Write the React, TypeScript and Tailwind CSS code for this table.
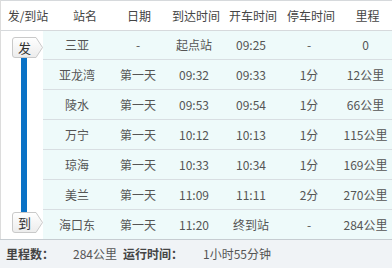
import type { ReactNode } from 'react'

// Train timetable: one header row, a white "发/到" rail on the left and the
// station rows on a pale cyan ground, with totals in a grey footer strip.
const stops = [
  ['三亚', '-', '起点站', '09:25', '-', '0'],
  ['亚龙湾', '第一天', '09:32', '09:33', '1分', '12公里'],
  ['陵水', '第一天', '09:53', '09:54', '1分', '66公里'],
  ['万宁', '第一天', '10:12', '10:13', '1分', '115公里'],
  ['琼海', '第一天', '10:33', '10:34', '1分', '169公里'],
  ['美兰', '第一天', '11:09', '11:11', '2分', '270公里'],
  ['海口东', '第一天', '11:20', '终到站', '-', '284公里'],
]

const headCols = 'grid grid-cols-[56px_56px_52px_62px_52px_64px_1fr]'
const bodyCols = 'grid grid-cols-[68px_54px_58px_56px_60px_1fr]'

function Badge({ children }: { children: ReactNode }) {
  return (
    <div className="relative ml-[10px] h-[21px] w-[33px] shrink-0">
      <svg width="33" height="21" viewBox="0 0 33 21" className="absolute inset-0">
        <defs>
          <linearGradient id="bg" x1="0" y1="0" x2="0" y2="1">
            <stop offset="0" stopColor="#ffffff" />
            <stop offset="1" stopColor="#ececec" />
          </linearGradient>
        </defs>
        <path
          d="M1.5 3 Q1.5 0.5 4 0.5 L25 0.5 L31.5 10.5 L25 20.5 L4 20.5 Q1.5 20.5 1.5 18 Z"
          fill="url(#bg)"
          stroke="#c9c9c9"
        />
      </svg>
      <span className="absolute left-[1px] top-0 flex h-[21px] w-[25px] items-center justify-center text-[13px] text-[#333]">
        {children}
      </span>
    </div>
  )
}

export default function App() {
  return (
    <div
      className="h-[268px] w-[392px] overflow-hidden bg-white text-[12px]"
      style={{ fontFamily: '"Microsoft YaHei", "Noto Sans CJK SC", sans-serif' }}
    >
      <div className="border-l border-[#dcdcdc]">
        <div className={`${headCols} h-[31px] items-center border-y border-[#d6d9dc] text-center text-[#444]`}>
          <div className="pr-[2px]">发/到站</div>
          <div>站名</div>
          <div>日期</div>
          <div>到达时间</div>
          <div>开车时间</div>
          <div>停车时间</div>
          <div>里程</div>
        </div>

        <div className="flex">
          <div className="flex w-[42px] shrink-0 flex-col pt-[6px] pb-[6px]">
            <Badge>发</Badge>
            <div className="ml-[20px] w-[6px] flex-1 bg-[#0a72c6]" />
            <Badge>到</Badge>
          </div>
          <div className="flex-1 bg-[#eefafa] text-center text-[#555]">
            {stops.map((s, i) => (
              <div
                key={s[0]}
                className={`${bodyCols} items-center ${
                  i === 0 || i === stops.length - 1 ? 'h-[29px]' : 'h-[30px]'
                } ${i < stops.length - 1 ? 'border-b border-[#d8dee2]' : ''}`}
              >
                {s.map((v, j) => (
                  <div key={j}>{v}</div>
                ))}
              </div>
            ))}
          </div>
        </div>
      </div>

      <div className="flex h-[29px] items-center border-t border-[#c6ccd1] bg-[#f0f3f6] pl-[6px] text-[#555]">
        <span className="w-[67px] font-bold text-[#444]">里程数：</span>
        <span className="w-[50px]">284公里</span>
        <span className="w-[80px] font-bold text-[#444]">运行时间：</span>
        <span>1小时55分钟</span>
      </div>
    </div>
  )
}
